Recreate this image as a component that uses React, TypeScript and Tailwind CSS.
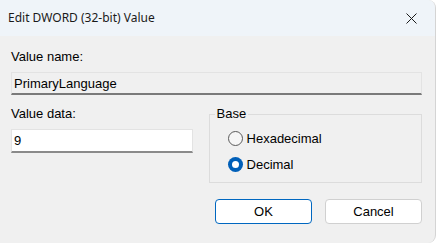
import React from "react";

export default function App() {
  const font = { fontFamily: '"Noto Sans", "Open Sans", sans-serif' };
  const body = { fontFamily: '"Liberation Sans", Arial, sans-serif' };
  return (
    <div className="w-[436px] h-[243px] bg-white overflow-hidden" style={font}>
      <div className="w-[436px] h-[243px] rounded-tr-[8px] rounded-br-[8px] overflow-hidden border-r border-[#d4d4d4] bg-[#f0f0f0] flex flex-col text-[12px] text-black">
        <div className="h-[36px] bg-[#eff4f9] flex items-center justify-between pl-[8px] pr-[16px] shrink-0">
          <span className="text-[12px] leading-none text-[#1a1a1a]">Edit DWORD (32-bit) Value</span>
          <svg width="11" height="11" viewBox="0 0 11 11" className="mr-[2px]">
            <path d="M0.5 0.5 L10.5 10.5 M10.5 0.5 L0.5 10.5" stroke="#1a1a1a" strokeWidth="1" />
          </svg>
        </div>
        <div className="flex flex-col pl-[11px] pr-[13px] pt-[13px] text-[13px]" style={body}>
          <div className="leading-[16px] h-[16px]">Value name:</div>
          <div className="mt-[7px] h-[23px] border-t border-l border-r border-[#e3e3e3] border-b-[2px] border-b-[#7a7a7a] bg-[#f0f0f0] flex items-center pl-[2px] leading-none">
            PrimaryLanguage
          </div>
          <div className="flex mt-[11px]">
            <div className="w-[182px] flex flex-col">
              <div className="leading-[16px] h-[16px]">Value data:</div>
              <div className="mt-[7px] h-[24px] bg-white border-t border-l border-r border-[#e3e3e3] border-b-[2px] border-b-[#8a8a8a] flex items-center pl-[2px] leading-none">
                9
              </div>
            </div>
            <fieldset className="ml-[16px] w-[214px] h-[76px] mt-[1px] border border-[#dcdcdc]">
              <legend className="ml-[5px] px-[2px] leading-[14px]">Base</legend>
              <div className="pl-[18px] flex flex-col">
                <div className="flex items-center h-[16px] mt-[9px]">
                  <span className="w-[15px] h-[15px] rounded-full border border-[#5a5a5a] bg-[#f6f6f6] mr-[4px] shrink-0" />
                  <span className="leading-none">Hexadecimal</span>
                </div>
                <div className="flex items-center h-[16px] mt-[10px]">
                  <span className="w-[15px] h-[15px] rounded-full bg-[#005fb8] mr-[4px] shrink-0 flex items-center justify-center">
                    <span className="w-[7px] h-[7px] rounded-full bg-white" />
                  </span>
                  <span className="leading-none">Decimal</span>
                </div>
              </div>
            </fieldset>
          </div>
          <div className="flex justify-end gap-[13px] mt-[16px]">
            <button className="w-[97px] h-[25px] rounded-[4px] bg-white border border-[#0067c0] leading-none">OK</button>
            <button className="w-[97px] h-[25px] rounded-[4px] bg-white border border-[#d0d0d0] leading-none">Cancel</button>
          </div>
        </div>
      </div>
    </div>
  );
}
